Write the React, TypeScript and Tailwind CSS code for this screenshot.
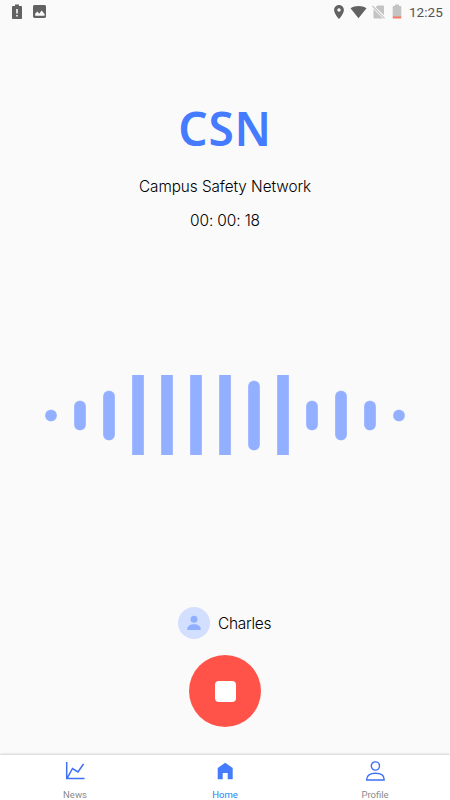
const bars = [12, 30, 50, 80, 80, 80, 80, 70, 80, 30, 50, 30, 12]

function StatusBar() {
  return (
    <header className="flex h-6 shrink-0 items-center justify-between pl-[11px] pr-[7px] text-[#626262]">
      <div className="flex items-center gap-[10px] pb-px">
        <svg width="12" height="16" viewBox="0 0 12 16">
          <path fill="currentColor" d="M4 .5h4V2h2.200c.4 0 .8.4.8.8v11.400c0 .4-.4.8-.8.8H1.800c-.4 0-.8-.4-.8-.8V2.800c0-.4.4-.8.8-.8H4z" />
          <path fill="#fafafa" d="M5.200 5h1.600v4.500H5.200zm0 6h1.600v1.500H5.200z" />
        </svg>
        <svg width="13" height="13" viewBox="3 3 18 18">
          <path fill="currentColor" d="M21 19V5c0-1.100-.9-2-2-2H5c-1.100 0-2 .9-2 2v14c0 1.100.9 2 2 2h14c1.100 0 2-.9 2-2z" />
          <path fill="#fafafa" d="M6 18v-3l3-3 2.500 3 3.500-4.500 4 5V18z" />
        </svg>
      </div>
      <div className="flex items-center">
        <svg className="mr-[6px] -mt-px" width="10" height="14" viewBox="5 2 14 20">
          <path fill="currentColor" d="M12 2C8.130 2 5 5.130 5 9c0 5.250 7 13 7 13s7-7.750 7-13c0-3.870-3.130-7-7-7zm0 9.500a2.500 2.500 0 1 1 0-5 2.500 2.500 0 0 1 0 5z" />
        </svg>
        <svg className="mr-[5px] -mt-px" width="17" height="14" viewBox="0 0 17 14">
          <path fill="currentColor" d="M.5 3.300C5 .1 12 .1 16.500 3.300L8.500 13.200z" />
        </svg>
        <svg className="mr-[7px] -mt-px" width="13" height="14" viewBox="0 0 13 14">
          <path fill="#c3c3c3" d="M5.500.5h5.500c.6 0 1 .4 1 1v8.800L3.700 2.300zM1.500 4L10.800 13.500H2.500c-.6 0-1-.4-1-1z" />
          <path stroke="#c3c3c3" strokeWidth="1.200" d="M.5 1L12.500 13.300" />
        </svg>
        <svg className="mr-[7px] -mt-px" width="10" height="15" viewBox="0 0 10 15">
          <path fill="#c3c3c3" d="M3 .5h4V2h1.700c.3 0 .6.3.6.6V13H.7V2.600c0-.3.3-.6.6-.6H3z" />
          <path fill="#f47b68" d="M.7 12.500h8.600V14c0 .3-.3.500-.5.500H1.200c-.3 0-.5-.2-.5-.5z" />
        </svg>
        <span className="font-['Roboto',sans-serif] text-[13.500px] leading-6 tracking-[0.1px] text-[#545454]">12:25</span>
      </div>
    </header>
  )
}

function Waveform() {
  return (
    <svg className="mx-auto mt-[142px] shrink-0" width="360" height="80" viewBox="0 0 360 80">
      {bars.map((h, i) => (
        <g key={i}>
          <rect
            x={i * 29}
            y={h === 80 ? 0 : 40.500 - h / 2}
            width="12"
            height={h}
            rx={h === 80 ? 0 : 6}
            fill="#b5c9ff"
          />
          <rect
            x={i * 29 + 0.500}
            y={h === 80 ? 0 : 41 - h / 2}
            width="11"
            height={h === 80 ? 80 : h - 1}
            rx={h === 80 ? 0 : 5.500}
            fill="#93afff"
          />
        </g>
      ))}
    </svg>
  )
}

function TabBar() {
  return (
    <nav className="grid h-[45px] shrink-0 grid-cols-3 bg-white font-['Roboto',sans-serif] text-[9.500px] leading-3 text-[#8b8b8b] shadow-[0_-1px_2px_rgba(0,0,0,0.16)]">
      <div className="flex flex-col items-center">
        <svg className="mt-[6px]" width="20" height="20" viewBox="0 0 20 20" fill="none" stroke="#3e70f5" strokeWidth="1.500">
          <path d="M1.700 1v16.500H19.500M2.300 16.800L7.500 7.500l5.500 3.500L18.500 3" />
        </svg>
        <span className="mt-[8px]">News</span>
      </div>
      <div className="flex flex-col items-center text-[#2385ef]">
        <svg className="mt-[6px]" width="20" height="20" viewBox="0 0 20 20">
          <path fill="#447bff" d="M10.200 1.800L17.700 7v11.200h-5V12H7.700v6.200h-5V7z" />
        </svg>
        <span className="mt-[8px]">Home</span>
      </div>
      <div className="flex flex-col items-center">
        <svg className="mt-[6px]" width="20" height="20" viewBox="0 0 20 20" fill="none" stroke="#3e70f5" strokeWidth="1.400">
          <circle cx="10.400" cy="5" r="4.100" />
          <path d="M1.700 19v-.8c0-3.700 3.400-5.900 8.700-5.900s8.700 2.200 8.700 5.900v.8z" />
        </svg>
        <span className="mt-[8px]">Profile</span>
      </div>
    </nav>
  )
}

export default function App() {
  return (
    <div className="flex h-[800px] w-[450px] flex-col overflow-hidden bg-[#fafafa] font-['Inter',sans-serif] text-black">
      <StatusBar />
      <main className="flex flex-1 flex-col">
        <h1 className="mt-[74px] text-center font-['Noto_Sans','Open_Sans',sans-serif] text-[46px] font-semibold leading-[60px] tracking-[0.8px] text-[#447bff]">
          CSN
        </h1>
        <p className="mt-[17px] text-center text-[15.300px] font-light leading-6 tracking-[-0.050px]">Campus Safety Network</p>
        <p className="mt-[10px] text-center text-[15.500px] font-light leading-6 tracking-[-0.150px]">00: 00: 18</p>
        <Waveform />
        <div className="mt-[152px] flex items-center pl-[178px]">
          <div className="flex size-8 items-center justify-center rounded-full bg-[#d3dfff]">
            <svg width="14" height="16" viewBox="0 0 14 16" fill="#91afff">
              <circle cx="7" cy="4.300" r="3.500" />
              <path d="M.3 15v-1c0-3 2.900-4.700 6.700-4.700s6.700 1.700 6.700 4.700v1z" />
            </svg>
          </div>
          <span className="ml-2 pt-0.5 text-[15.500px] font-light leading-6 tracking-[-0.300px]">Charles</span>
        </div>
        <button className="mx-auto mt-4 flex size-[72px] shrink-0 items-center justify-center rounded-full bg-[#ff5349]">
          <span className="size-[21px] rounded-[4px] bg-white" />
        </button>
      </main>
      <TabBar />
    </div>
  )
}
